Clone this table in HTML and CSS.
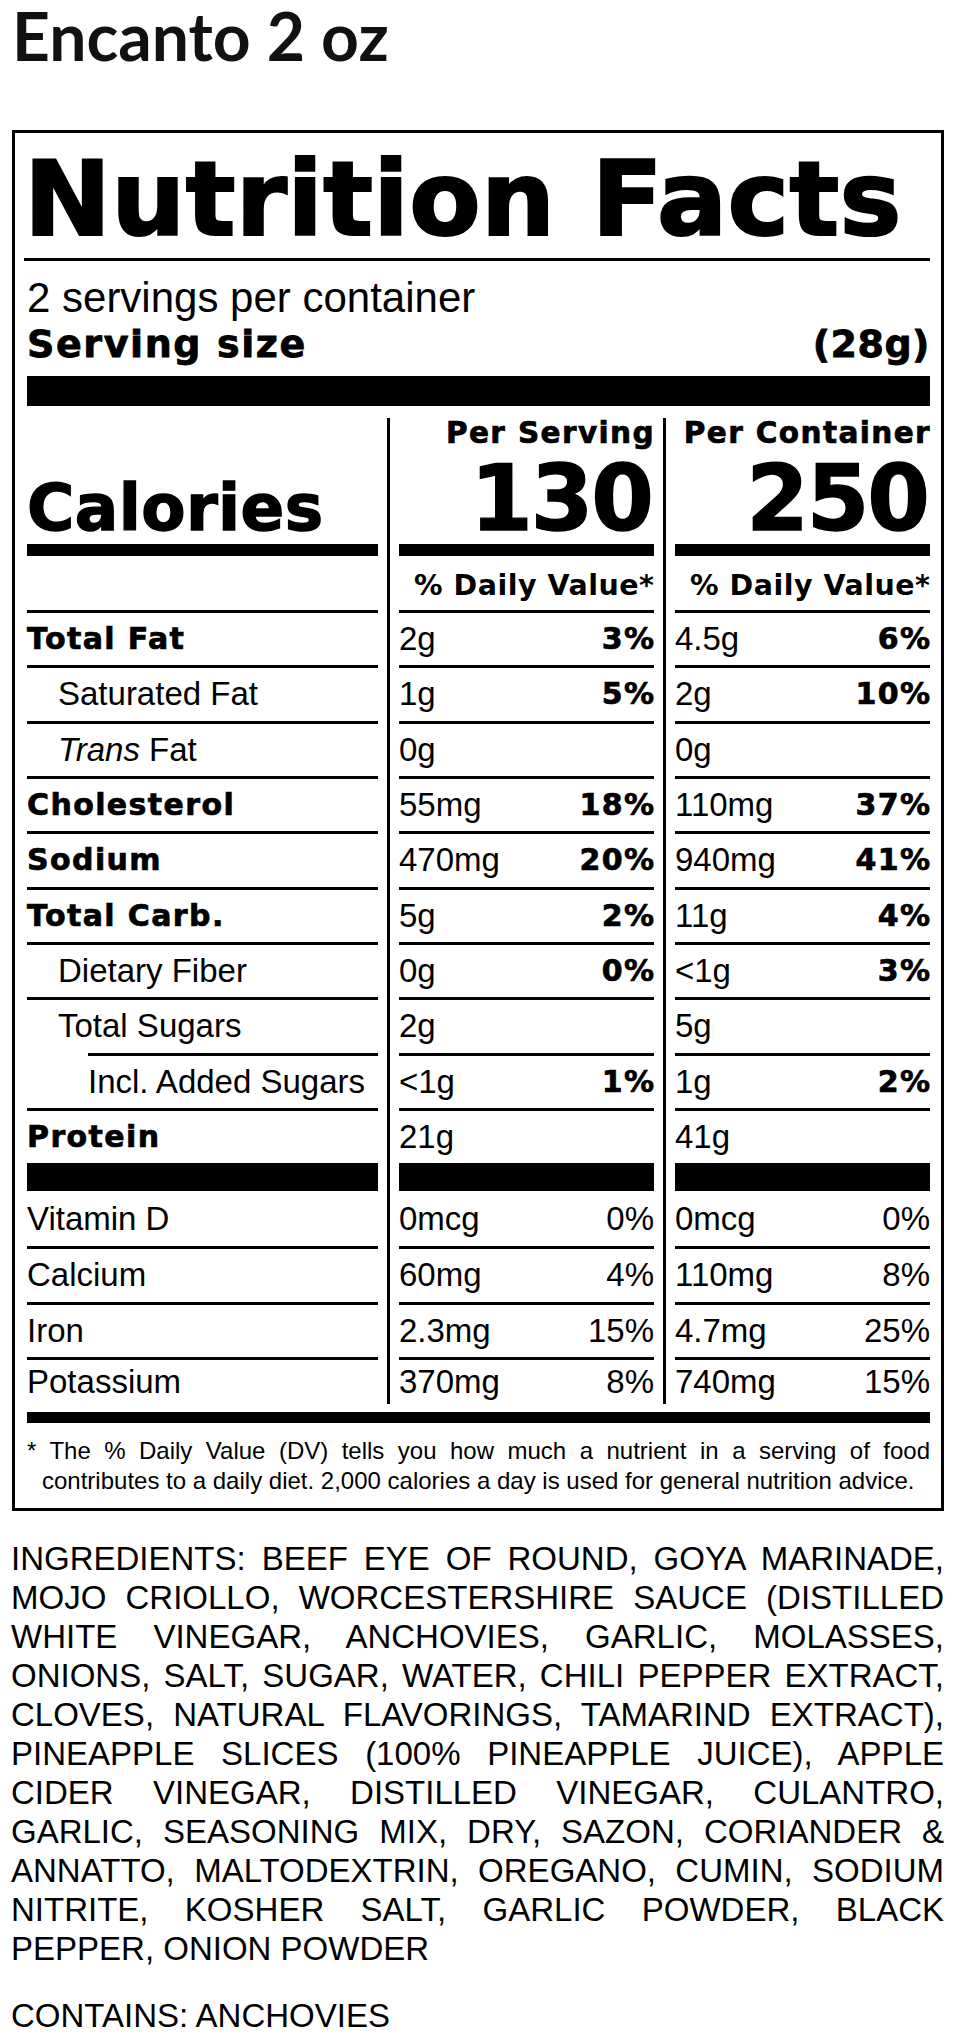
FILE: index.html
```html
<!DOCTYPE html>
<html lang="en">
<head>
<meta charset="utf-8">
<title>Encanto 2 oz</title>
<link rel="stylesheet" href="styles.css">
</head>
<body>
<h1 class="title">Encanto 2 oz</h1>

<section class="label">
  <h2 class="nf-title">Nutrition Facts</h2>
  <p class="servings">2 servings per container</p>
  <div class="serving-size"><span>Serving size</span><span class="ss-val">(28g)</span></div>
  <div class="bar bar-xl"></div>

  <div class="cols">
    <div class="col col-names">
      <div class="head head-names"><span class="cal">Calories</span></div>
      <div class="bar bar-md"></div>
      <div class="dv"></div>
      <div class="row"><b class="hb">Total Fat</b></div>
      <div class="row sub">Saturated Fat</div>
      <div class="row sub"><span><i>Trans</i> Fat</span></div>
      <div class="row"><b class="hb">Cholesterol</b></div>
      <div class="row"><b class="hb">Sodium</b></div>
      <div class="row"><b class="hb">Total Carb.</b></div>
      <div class="row sub">Dietary Fiber</div>
      <div class="row sub">Total Sugars</div>
      <div class="row sub2">Incl. Added Sugars</div>
      <div class="row protein"><b class="hb">Protein</b></div>
      <div class="bar bar-lg"></div>
      <div class="row first">Vitamin D</div>
      <div class="row">Calcium</div>
      <div class="row">Iron</div>
      <div class="row last">Potassium</div>
    </div>
    <div class="divider"></div>
    <div class="col col-val">
      <div class="head head-val"><span class="per">Per Serving</span><span class="kcal">130</span></div>
      <div class="bar bar-md"></div>
      <div class="dv"><b class="hb dvt">% Daily Value*</b></div>
      <div class="row"><span>2g</span><b class="hb">3%</b></div>
      <div class="row"><span>1g</span><b class="hb">5%</b></div>
      <div class="row"><span>0g</span></div>
      <div class="row"><span>55mg</span><b class="hb">18%</b></div>
      <div class="row"><span>470mg</span><b class="hb">20%</b></div>
      <div class="row"><span>5g</span><b class="hb">2%</b></div>
      <div class="row"><span>0g</span><b class="hb">0%</b></div>
      <div class="row"><span>2g</span></div>
      <div class="row"><span>&lt;1g</span><b class="hb">1%</b></div>
      <div class="row protein"><span>21g</span></div>
      <div class="bar bar-lg"></div>
      <div class="row first"><span>0mcg</span><span>0%</span></div>
      <div class="row"><span>60mg</span><span>4%</span></div>
      <div class="row"><span>2.3mg</span><span>15%</span></div>
      <div class="row last"><span>370mg</span><span>8%</span></div>
    </div>
    <div class="divider"></div>
    <div class="col col-val">
      <div class="head head-val"><span class="per">Per Container</span><span class="kcal">250</span></div>
      <div class="bar bar-md"></div>
      <div class="dv"><b class="hb dvt">% Daily Value*</b></div>
      <div class="row"><span>4.5g</span><b class="hb">6%</b></div>
      <div class="row"><span>2g</span><b class="hb">10%</b></div>
      <div class="row"><span>0g</span></div>
      <div class="row"><span>110mg</span><b class="hb">37%</b></div>
      <div class="row"><span>940mg</span><b class="hb">41%</b></div>
      <div class="row"><span>11g</span><b class="hb">4%</b></div>
      <div class="row"><span>&lt;1g</span><b class="hb">3%</b></div>
      <div class="row"><span>5g</span></div>
      <div class="row"><span>1g</span><b class="hb">2%</b></div>
      <div class="row protein"><span>41g</span></div>
      <div class="bar bar-lg"></div>
      <div class="row first"><span>0mcg</span><span>0%</span></div>
      <div class="row"><span>110mg</span><span>8%</span></div>
      <div class="row"><span>4.7mg</span><span>25%</span></div>
      <div class="row last"><span>740mg</span><span>15%</span></div>
    </div>
  </div>

  <div class="bar bar-bottom"></div>
  <p class="foot">
    <span class="foot-line foot-first">* The % Daily Value (DV) tells you how much a nutrient in a serving of food</span>
    <span class="foot-line foot-last">contributes to a daily diet. 2,000 calories a day is used for general nutrition advice.</span>
  </p>
</section>

<div class="ingredients">
  <span class="ing-line">INGREDIENTS: BEEF EYE OF ROUND, GOYA MARINADE,</span>
  <span class="ing-line">MOJO CRIOLLO, WORCESTERSHIRE SAUCE (DISTILLED</span>
  <span class="ing-line">WHITE VINEGAR, ANCHOVIES, GARLIC, MOLASSES,</span>
  <span class="ing-line">ONIONS, SALT, SUGAR, WATER, CHILI PEPPER EXTRACT,</span>
  <span class="ing-line">CLOVES, NATURAL FLAVORINGS, TAMARIND EXTRACT),</span>
  <span class="ing-line">PINEAPPLE SLICES (100% PINEAPPLE JUICE), APPLE</span>
  <span class="ing-line">CIDER VINEGAR, DISTILLED VINEGAR, CULANTRO,</span>
  <span class="ing-line">GARLIC, SEASONING MIX, DRY, SAZON, CORIANDER &amp;</span>
  <span class="ing-line">ANNATTO, MALTODEXTRIN, OREGANO, CUMIN, SODIUM</span>
  <span class="ing-line">NITRITE, KOSHER SALT, GARLIC POWDER, BLACK</span>
  <span class="ing-line ing-last">PEPPER, ONION POWDER</span>
</div>
<p class="contains">CONTAINS: ANCHOVIES</p>
</body>
</html>
```

FILE: styles.css
```css
* {
  box-sizing: border-box;
}

body {
  margin: 0;
  font-family: "Liberation Sans", Arial, sans-serif;
  color: #000;
  background: #fff;
}

.title {
  margin: 4px 0 0 12px;
  font-family: Lato, "Liberation Sans", sans-serif;
  font-weight: 700;
  font-size: 66px;
  line-height: 64px;
  color: #111;
}

.label {
  margin: 62px 13px 0 12px;
  border: 3px solid #000;
  padding: 14px 11px 12.7px 12px;
}

.hb,
.nf-title,
.serving-size,
.cal,
.per,
.kcal {
  font-family: "DejaVu Sans", sans-serif;
  font-weight: 700;
}

.nf-title {
  margin: 0 0 0 -3px;
  font-size: 104px;
  line-height: 104px;
  letter-spacing: 0.3px;
  padding-bottom: 7px;
  border-bottom: 3px solid #000;
  -webkit-text-stroke: 2.2px #000;
}

.servings {
  margin: 14px 0 0;
  font-size: 42px;
  line-height: 46px;
}

.serving-size {
  display: flex;
  justify-content: space-between;
  font-size: 38px;
  line-height: 46px;
  letter-spacing: 1.6px;
  -webkit-text-stroke: 0.8px #000;
}

.ss-val {
  letter-spacing: 0.5px;
}

.bar {
  background: #000;
}

.bar-xl {
  height: 30px;
  margin-top: 9px;
}

.cols {
  display: flex;
  margin-top: 12px;
}

.col {
  display: flex;
  flex-direction: column;
}

.col-names {
  width: 351px;
}

.col-val {
  width: 255px;
}

.divider {
  width: 3px;
  margin: 0 9px;
  background: #000;
}

.head {
  height: 126px;
  display: flex;
  flex-direction: column;
}

.head-names {
  padding-top: 54.7px;
}

.cal {
  font-size: 64.5px;
  line-height: 70px;
  letter-spacing: 0.4px;
  -webkit-text-stroke: 1.4px #000;
}

.head-val {
  align-items: flex-end;
}

.per {
  font-size: 29.5px;
  line-height: 30px;
  letter-spacing: 1.4px;
  margin-right: -1px;
  -webkit-text-stroke: 0.7px #000;
}

.kcal {
  margin-top: 6px;
  font-size: 90px;
  line-height: 90px;
  letter-spacing: -2px;
  margin-right: 2px;
  -webkit-text-stroke: 1.4px #000;
}

.bar-md {
  height: 12px;
}

.dv {
  height: 54px;
  padding-top: 6px;
  display: flex;
  align-items: center;
  justify-content: flex-end;
}

.dvt {
  font-size: 28.5px;
  line-height: 30px;
  letter-spacing: 0.5px;
  margin-right: -0.5px;
}

.row {
  height: 55.33px;
  border-top: 3px solid #000;
  display: flex;
  align-items: center;
  justify-content: space-between;
  font-size: 33px;
  line-height: 36px;
  white-space: nowrap;
}

.row .hb {
  font-size: 30px;
  line-height: 36px;
  letter-spacing: 1.4px;
  -webkit-text-stroke: 0.7px #000;
}

.col-val .row .hb {
  margin-right: -1.4px;
}

.row.sub {
  padding-left: 31px;
}

.row.sub2 {
  margin-left: 61px;
}

.row.protein {
  height: 55px;
}

.bar-lg {
  height: 28px;
}

.row.first {
  border-top: 0;
}

.row.last {
  height: 47px;
}

.bar-bottom {
  height: 11px;
  margin-top: 8px;
}

.foot {
  margin: 13.3px 0 0;
  font-size: 24px;
  line-height: 29.5px;
}

.foot-line {
  display: block;
}

.foot-first {
  text-align: justify;
  text-align-last: justify;
}

.foot-last {
  padding-left: 15px;
}

.ingredients {
  margin: 28px 13px 0 11px;
  font-size: 33px;
  line-height: 39px;
}

.ing-line {
  display: block;
  text-align: justify;
  text-align-last: justify;
  white-space: nowrap;
}

.ing-line.ing-last {
  text-align-last: left;
}

.contains {
  margin: 28px 0 0 11px;
  font-size: 33px;
  line-height: 39px;
}
```
